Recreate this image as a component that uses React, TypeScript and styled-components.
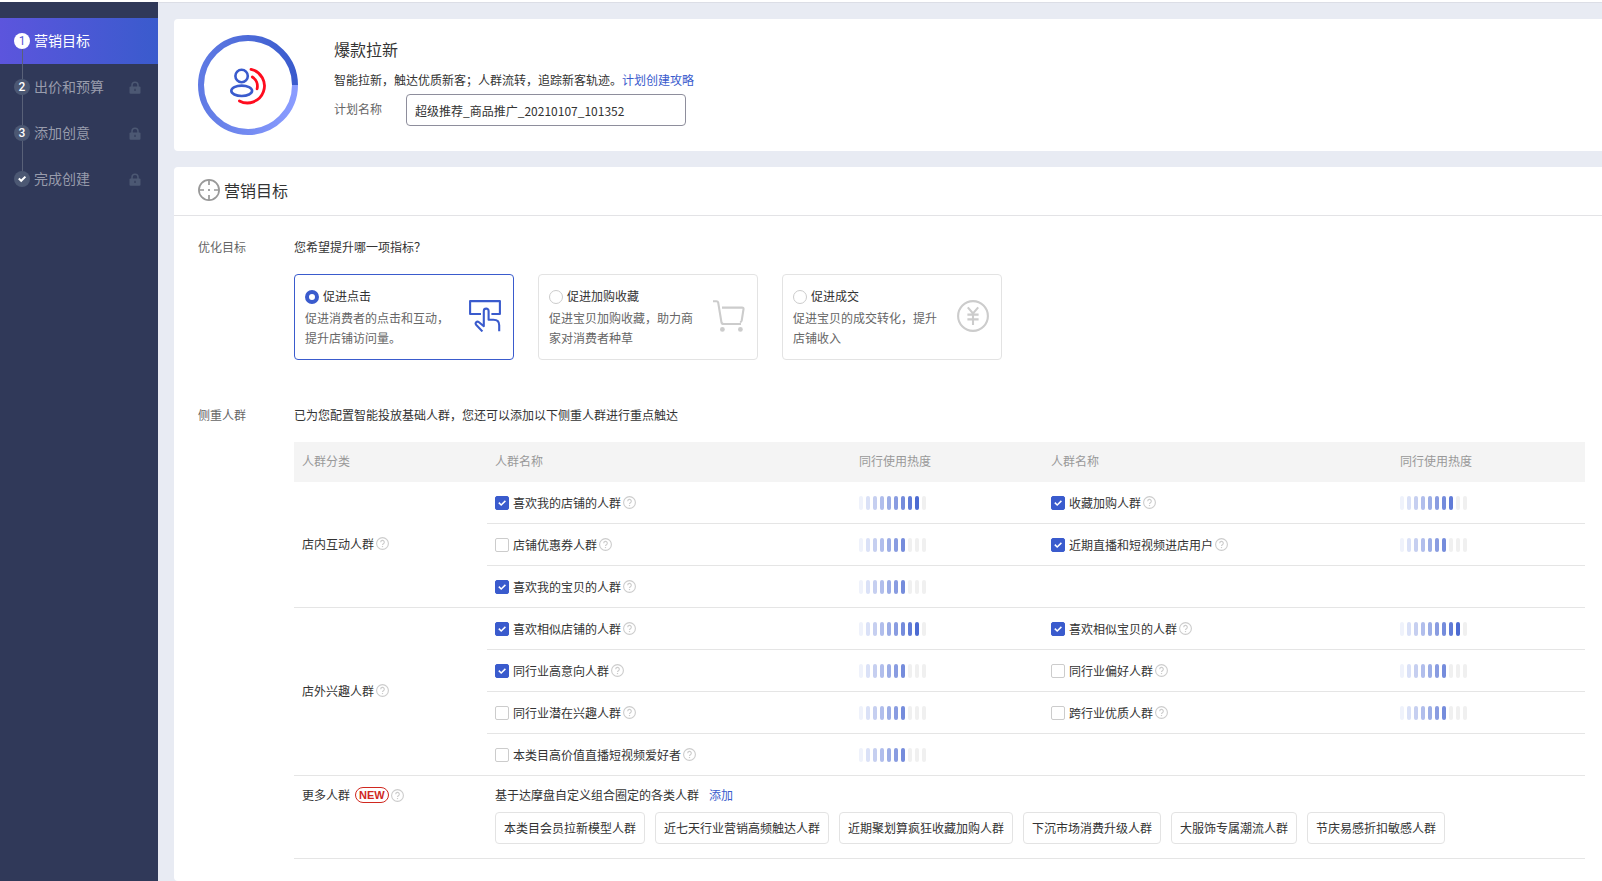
import React, { useState } from "react";
import styled, { createGlobalStyle } from "styled-components";

const BLUE = "#3a5bcd";

const GlobalStyle = createGlobalStyle`
  *, *::before, *::after { box-sizing: border-box; }
  body {
    margin: 0;
    background: #e8ebf3;
    color: #333;
    font: 12px/20px "Noto Sans CJK SC", sans-serif;
  }
  h1, h2, p, ol { margin: 0; padding: 0; font-weight: 400; }
  button, input { font: inherit; color: inherit; }
  a { color: ${BLUE}; text-decoration: none; }
`;

const Page = styled.div`
  display: flex;
  min-height: 100vh;
  border-top: 2px solid #fff;
`;

const Sidebar = styled.nav`
  flex: 0 0 158px;
  padding-top: 16px;
  background: #303959;
`;

const StepList = styled.ol`
  list-style: none;
`;

const Step = styled.li<{ $active?: boolean }>`
  position: relative;
  display: flex;
  align-items: center;
  gap: 4px;
  height: 46px;
  padding: 0 17px 0 14px;
  font-size: 14px;
  color: ${(p) => (p.$active ? "#fff" : "#989cac")};
  background: ${(p) => (p.$active ? `linear-gradient(90deg, #5c55dd, ${BLUE})` : "none")};

  &:not(:last-child)::after {
    content: "";
    position: absolute;
    z-index: 1;
    left: 22px;
    top: 31px;
    width: 1px;
    height: 30px;
    background: #596178;
  }
`;

const StepMark = styled.span<{ $active?: boolean }>`
  display: grid;
  place-items: center;
  width: 16px;
  height: 16px;
  border-radius: 50%;
  font: ${(p) => (p.$active ? 400 : 500)} 12px/16px Roboto, sans-serif;
  color: ${(p) => (p.$active ? "#5957d8" : "#fff")};
  background: ${(p) => (p.$active ? "#fff" : "#4c5873")};
`;

const StepName = styled.span`
  flex: 1;
  padding-bottom: 2px;
`;

const Main = styled.main`
  flex: 1;
  min-width: 0;
  display: flex;
  flex-direction: column;
  gap: 16px;
  padding: 16px 0 0 16px;
  border-top: 1px solid #dcdee6;
`;

const Panel = styled.section<{ $fill?: boolean }>`
  flex: ${(p) => (p.$fill ? "1" : "none")};
  background: #fff;
  border-radius: 4px 0 0 4px;
`;

const PlanHead = styled.div`
  display: flex;
  gap: 36px;
  padding: 16px 24px;
`;

const PlanInfo = styled.div`
  padding-top: 2px;
`;

const PlanTitle = styled.h1`
  font-size: 16px;
  line-height: 24px;
  margin-bottom: 9px;
`;

const Field = styled.div`
  display: flex;
  align-items: center;
  gap: 24px;
  margin-top: 4px;
`;

const FieldLabel = styled.label`
  color: #666;
  margin-bottom: 2px;
`;

const TextInput = styled.input`
  width: 280px;
  height: 32px;
  padding: 0 8px;
  border: 1px solid #8e8e9c;
  border-radius: 4px;
  background: #fff;
  outline: none;
`;

const SectionHead = styled.header`
  display: flex;
  align-items: center;
  gap: 4px;
  height: 49px;
  padding: 0 24px 2px;
  border-bottom: 1px solid #e3e3e6;
`;

const SectionTitle = styled.h2`
  font-size: 16px;
  line-height: 24px;
`;

const FormBody = styled.div`
  display: flex;
  flex-direction: column;
  gap: 45px;
  padding: 21px 17px 22px 24px;
`;

const FormRow = styled.div`
  display: grid;
  grid-template-columns: 96px minmax(0, 1fr);
`;

const RowLabel = styled.span`
  color: #666;
`;

const GoalList = styled.div`
  display: flex;
  flex-wrap: wrap;
  gap: 24px;
  margin-top: 17px;
`;

const GoalCard = styled.label<{ $on: boolean }>`
  display: flex;
  align-items: center;
  justify-content: space-between;
  width: 220px;
  height: 86px;
  padding: 0 12px 2px 10px;
  border: 1px solid ${(p) => (p.$on ? BLUE : "#e3e3e3")};
  border-radius: 4px;
  color: ${(p) => (p.$on ? BLUE : "#ccc")};
  cursor: pointer;
`;

const GoalText = styled.span`
  width: 146px;
  color: #666;
`;

const GoalName = styled.span`
  display: flex;
  align-items: center;
  gap: 4px;
  height: 24px;
  color: #333;
`;

const Radio = styled.input`
  appearance: none;
  width: 14px;
  height: 14px;
  margin: 2px 0 0;
  border: 1px solid #ccc;
  border-radius: 50%;
  background: #fff;
  &:checked { border: 4px solid ${BLUE}; }
`;

const Table = styled.table`
  width: 100%;
  margin-top: 17px;
  table-layout: fixed;
  border-collapse: separate;
  border-spacing: 0;
`;

const Col = styled.col<{ $w?: string }>`
  width: ${(p) => p.$w ?? "auto"};
`;

const HeadCell = styled.th`
  height: 40px;
  padding: 0 8px 2px;
  text-align: left;
  font-weight: 400;
  color: #999;
  background: #f4f4f4;
`;

const Cell = styled.td`
  height: 42px;
  padding: 0 8px;
  border-bottom: 1px solid #e5e5e5;
`;

const GroupCell = styled.th`
  padding: 0 8px 2px;
  text-align: left;
  font-weight: 400;
  border-bottom: 1px solid #e5e5e5;
`;

const MoreHead = styled(GroupCell)`
  padding-top: 9px;
  vertical-align: top;
`;

const MoreCell = styled(Cell)`
  padding-top: 9px;
  padding-bottom: 14px;
  vertical-align: top;
`;

const Inline = styled.span`
  display: flex;
  align-items: center;
  gap: 2px;
`;

const CheckLabel = styled.label`
  display: flex;
  align-items: center;
  gap: 4px;
  cursor: pointer;
`;

const CheckWrap = styled.span`
  display: grid;
  place-items: center;
  > * { grid-area: 1 / 1; }
  svg { pointer-events: none; }
`;

const Checkbox = styled.input`
  appearance: none;
  width: 14px;
  height: 14px;
  margin: 0;
  border: 1px solid #ccc;
  border-radius: 2px;
  background: #fff;
  &:checked { border-color: ${BLUE}; background: ${BLUE}; }
`;

const Bars = styled.span`
  display: flex;
  gap: 3px;
`;

const Bar = styled.span<{ $color: string }>`
  width: 4px;
  height: 14px;
  border-radius: 2px;
  background: ${(p) => p.$color};
`;

const NewBadge = styled.span`
  height: 16px;
  margin-left: 3px;
  padding: 0 3px;
  border: 1px solid #d0281f;
  border-radius: 8px;
  font: 700 11px/14px "Liberation Sans", sans-serif;
  color: #d0281f;
`;

const AddLink = styled.a`
  margin-left: 10px;
`;

const Chips = styled.div`
  display: flex;
  flex-wrap: wrap;
  gap: 10px;
  margin-top: 7px;
`;

const Chip = styled.button`
  height: 32px;
  padding: 0 8px;
  border: 1px solid #e3e3e3;
  border-radius: 4px;
  background: #fff;
  cursor: pointer;
`;

const LockIcon = () => (
  <svg width="12" height="13" viewBox="0 0 12 13" aria-hidden="true">
    <path d="M3 6.4V4.2a3 3 0 0 1 6 0v2.2" fill="none" stroke="#4c5873" strokeWidth="1.5" />
    <rect x="0.5" y="5.4" width="11" height="7.4" rx="1" fill="#4c5873" />
    <rect x="5.4" y="7.8" width="1.2" height="2.2" fill="#303959" />
  </svg>
);

const TickIcon = () => (
  <svg width="10" height="10" viewBox="0 0 10 10" aria-hidden="true">
    <path d="M1.8 4.6 4.2 6.8 8.4 2.6" fill="none" stroke="#fff" strokeWidth="2" />
  </svg>
);

const CheckMark = () => (
  <svg width="14" height="14" viewBox="0 0 14 14" aria-hidden="true">
    <path d="M3.8 6.6 6.2 9 10.4 4.9" fill="none" stroke="#fff" strokeWidth="1.5" />
  </svg>
);

const HelpIcon = () => (
  <svg width="13" height="13" viewBox="0 0 13 13" fill="none" stroke="#ccc" aria-hidden="true">
    <circle cx="6.5" cy="6.5" r="5.9" strokeWidth="1.1" />
    <path d="M4.7 5.2a1.8 1.8 0 1 1 2.7 1.5c-.6.4-.9.7-.9 1.4" strokeWidth="1.1" />
    <path d="M6.5 9v1.1" strokeWidth="1.2" />
  </svg>
);

const PlanLogo = () => (
  <svg width="100" height="100" viewBox="0 0 100 100" fill="none" aria-hidden="true">
    <defs>
      <linearGradient id="ringTop" x1="1" y1="0" x2="0" y2="0">
        <stop offset="0" stopColor="#3a5bcd" />
        <stop offset="1" stopColor="#5f7ae4" />
      </linearGradient>
      <linearGradient id="ringBottom" x1="0" y1="0" x2="1" y2="0">
        <stop offset="0" stopColor="#5f7ae4" />
        <stop offset="1" stopColor="#8a9cff" />
      </linearGradient>
    </defs>
    <path d="M3 50a47 47 0 0 1 94 0" stroke="url(#ringTop)" strokeWidth="6" />
    <path d="M3 50a47 47 0 0 0 94 0" stroke="url(#ringBottom)" strokeWidth="6" />
    <circle cx="43.6" cy="41" r="6.2" stroke="#3a5bcd" strokeWidth="2.6" />
    <ellipse cx="43.7" cy="55.8" rx="10.4" ry="5.2" stroke="#3a5bcd" strokeWidth="2.6" />
    <path
      d="M53 34.3A17 17 0 1 1 41.4 65.9M54.3 42a11 11 0 0 1 4.8 11.8"
      stroke="#ff0c1e"
      strokeWidth="2.8"
      strokeLinecap="round"
    />
  </svg>
);

const TargetIcon = () => (
  <svg width="22" height="22" viewBox="0 0 22 22" fill="none" stroke="#999" aria-hidden="true">
    <circle cx="11" cy="11" r="10.1" strokeWidth="1.7" />
    <path d="M11 1v5M11 16v5M1 11h5M16 11h5" strokeWidth="1.7" />
    <path d="M10.1 11h1.8" strokeWidth="1.8" />
  </svg>
);

const ClickIcon = () => (
  <svg width="32" height="32" viewBox="0 0 32 32" fill="none" stroke="currentColor" strokeWidth="2.1" aria-hidden="true">
    <path d="M12 14H1.1V1.1h29.8V14H22.4" strokeLinejoin="round" />
    <path
      d="M13.4 31.4 7.3 25c-1.7-2 .5-4.6 2.7-2.8l4.8 4V11a2.4 2.4 0 0 1 4.8 0v8.8h4.8c3.8 0 5.8 1.8 5.8 5.4v6"
      strokeLinejoin="round"
    />
  </svg>
);

const CartIcon = () => (
  <svg width="32" height="32" viewBox="0 0 32 32" fill="none" stroke="currentColor" strokeWidth="2.1" aria-hidden="true">
    <path d="M0 1.2h3.4c1 0 1.6.5 1.8 1.4L8.4 22c.2 1.3.9 2 2.2 2H28" />
    <path d="M9 7.6h20c1.2 0 1.7.6 1.5 1.7l-1.8 11.3c-.2 1-.8 1.4-1.8 1.4" />
    <circle cx="9.4" cy="29.4" r="2.4" fill="currentColor" stroke="none" />
    <circle cx="27.4" cy="29.4" r="2.4" fill="currentColor" stroke="none" />
  </svg>
);

const YuanIcon = () => (
  <svg width="32" height="32" viewBox="0 0 32 32" fill="none" stroke="currentColor" strokeWidth="2.1" aria-hidden="true">
    <circle cx="16" cy="16" r="14.9" />
    <path d="m10.8 7.4 5.2 6 5.2-6M16 13.4V25M10.4 14.6h11.2M10.4 19.4h11.2" />
  </svg>
);

const STEPS = [
  { mark: "1", name: "营销目标" },
  { mark: "2", name: "出价和预算" },
  { mark: "3", name: "添加创意" },
  { mark: <TickIcon />, name: "完成创建" },
];

const GOALS = [
  { name: "促进点击", text: "促进消费者的点击和互动，提升店铺访问量。", Icon: ClickIcon },
  { name: "促进加购收藏", text: "促进宝贝加购收藏，助力商家对消费者种草", Icon: CartIcon },
  { name: "促进成交", text: "促进宝贝的成交转化，提升店铺收入", Icon: YuanIcon },
];

type Crowd = { name: string; heat: number; on: boolean };
const crowd = (name: string, heat: number, on: boolean): Crowd => ({ name, heat, on });

const GROUPS: { name: string; rows: Crowd[][] }[] = [
  {
    name: "店内互动人群",
    rows: [
      [crowd("喜欢我的店铺的人群", 9, true), crowd("收藏加购人群", 8, true)],
      [crowd("店铺优惠券人群", 7, false), crowd("近期直播和短视频进店用户", 7, true)],
      [crowd("喜欢我的宝贝的人群", 7, true)],
    ],
  },
  {
    name: "店外兴趣人群",
    rows: [
      [crowd("喜欢相似店铺的人群", 9, true), crowd("喜欢相似宝贝的人群", 9, true)],
      [crowd("同行业高意向人群", 7, true), crowd("同行业偏好人群", 7, false)],
      [crowd("同行业潜在兴趣人群", 7, false), crowd("跨行业优质人群", 7, false)],
      [crowd("本类目高价值直播短视频爱好者", 7, false)],
    ],
  },
];

const CHIPS = [
  "本类目会员拉新模型人群",
  "近七天行业营销高频触达人群",
  "近期聚划算疯狂收藏加购人群",
  "下沉市场消费升级人群",
  "大服饰专属潮流人群",
  "节庆易感折扣敏感人群",
];

const HEAT_COLORS = [
  "#eff2fb", "#dae1f7", "#c6cff0", "#b1beec", "#9daee6",
  "#899ce1", "#758cdc", "#607bd7", "#4c6bd2", "#3a5bcd",
];

const Heat = ({ value }: { value: number }) => (
  <Bars role="img" aria-label={`${value}/10`}>
    {HEAT_COLORS.map((c, i) => (
      <Bar key={c} $color={i < value ? c : "#f0f0f0"} />
    ))}
  </Bars>
);

const CrowdCells = ({ item }: { item?: Crowd }) => {
  const [on, setOn] = useState(item?.on ?? false);
  if (!item) return <Cell colSpan={2} />;
  return (
    <>
      <Cell>
        <Inline>
          <CheckLabel>
            <CheckWrap>
              <Checkbox type="checkbox" checked={on} onChange={() => setOn(!on)} />
              {on && <CheckMark />}
            </CheckWrap>
            {item.name}
          </CheckLabel>
          <HelpIcon />
        </Inline>
      </Cell>
      <Cell>
        <Heat value={item.heat} />
      </Cell>
    </>
  );
};

export default function App() {
  const [goal, setGoal] = useState(0);
  const [plan, setPlan] = useState("超级推荐_商品推广_20210107_101352");

  return (
    <>
      <GlobalStyle />
      <Page>
        <Sidebar>
          <StepList>
            {STEPS.map((s, i) => (
              <Step key={s.name} $active={i === 0}>
                <StepMark $active={i === 0}>{s.mark}</StepMark>
                <StepName>{s.name}</StepName>
                {i > 0 && <LockIcon />}
              </Step>
            ))}
          </StepList>
        </Sidebar>

        <Main>
          <Panel>
            <PlanHead>
              <PlanLogo />
              <PlanInfo>
                <PlanTitle>爆款拉新</PlanTitle>
                <p>
                  智能拉新，触达优质新客；人群流转，追踪新客轨迹。<a href="#guide">计划创建攻略</a>
                </p>
                <Field>
                  <FieldLabel htmlFor="plan">计划名称</FieldLabel>
                  <TextInput id="plan" value={plan} onChange={(e) => setPlan(e.target.value)} />
                </Field>
              </PlanInfo>
            </PlanHead>
          </Panel>

          <Panel $fill>
            <SectionHead>
              <TargetIcon />
              <SectionTitle>营销目标</SectionTitle>
            </SectionHead>
            <FormBody>
              <FormRow>
                <RowLabel>优化目标</RowLabel>
                <div>
                  <p>您希望提升哪一项指标？</p>
                  <GoalList role="radiogroup" aria-label="优化目标">
                    {GOALS.map(({ name, text, Icon }, i) => (
                      <GoalCard key={name} $on={goal === i}>
                        <GoalText>
                          <GoalName>
                            <Radio type="radio" name="goal" checked={goal === i} onChange={() => setGoal(i)} />
                            {name}
                          </GoalName>
                          {text}
                        </GoalText>
                        <Icon />
                      </GoalCard>
                    ))}
                  </GoalList>
                </div>
              </FormRow>

              <FormRow>
                <RowLabel>侧重人群</RowLabel>
                <div>
                  <p>已为您配置智能投放基础人群，您还可以添加以下侧重人群进行重点触达</p>
                  <Table>
                    <colgroup>
                      <Col $w="193px" />
                      <Col $w="28.2%" />
                      <Col $w="192px" />
                      <Col />
                      <Col $w="193px" />
                    </colgroup>
                    <thead>
                      <tr>
                        <HeadCell>人群分类</HeadCell>
                        <HeadCell>人群名称</HeadCell>
                        <HeadCell>同行使用热度</HeadCell>
                        <HeadCell>人群名称</HeadCell>
                        <HeadCell>同行使用热度</HeadCell>
                      </tr>
                    </thead>
                    <tbody>
                      {GROUPS.map((g) =>
                        g.rows.map((r, i) => (
                          <tr key={r[0].name}>
                            {i === 0 && (
                              <GroupCell scope="rowgroup" rowSpan={g.rows.length}>
                                <Inline>
                                  {g.name}
                                  <HelpIcon />
                                </Inline>
                              </GroupCell>
                            )}
                            <CrowdCells item={r[0]} />
                            <CrowdCells item={r[1]} />
                          </tr>
                        ))
                      )}
                      <tr>
                        <MoreHead scope="row">
                          <Inline>
                            更多人群
                            <NewBadge>NEW</NewBadge>
                            <HelpIcon />
                          </Inline>
                        </MoreHead>
                        <MoreCell colSpan={4}>
                          <p>
                            基于达摩盘自定义组合圈定的各类人群
                            <AddLink href="#add">添加</AddLink>
                          </p>
                          <Chips>
                            {CHIPS.map((c) => (
                              <Chip key={c} type="button">{c}</Chip>
                            ))}
                          </Chips>
                        </MoreCell>
                      </tr>
                    </tbody>
                  </Table>
                </div>
              </FormRow>
            </FormBody>
          </Panel>
        </Main>
      </Page>
    </>
  );
}
